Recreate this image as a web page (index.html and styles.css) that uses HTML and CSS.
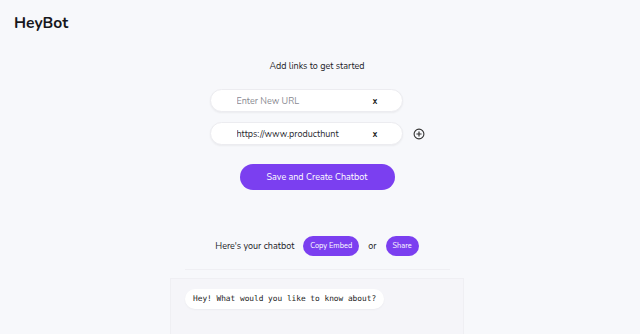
FILE: index.html
```html
<!DOCTYPE html>
<html>
<head>
<meta charset="utf-8">
<link rel="stylesheet" href="styles.css">
</head>
<body>
<header class="topbar"><h1 class="logo">HeyBot</h1></header>
<main class="main">
  <p class="intro">Add links to get started</p>
  <div class="links">
    <div class="link-row">
      <div class="url-field"><span class="url-text placeholder">Enter New URL</span><span class="clear">x</span></div>
      <span class="add-slot"></span>
    </div>
    <div class="link-row">
      <div class="url-field"><span class="url-text">https://www.producthunt</span><span class="clear">x</span></div>
      <span class="add-slot">
        <svg class="add-icon" viewBox="0 0 12 12" width="12" height="12"><circle cx="6" cy="6" r="4.9" fill="none" stroke="#333" stroke-width="1.1"/><path d="M6 3.4v5.2M3.4 6h5.2" stroke="#333" stroke-width="1.2"/></svg>
      </span>
    </div>
  </div>
  <button class="primary">Save and Create Chatbot</button>
  <div class="share-row">
    <span class="share-label">Here's your chatbot</span>
    <button class="small-btn">Copy Embed</button>
    <span class="or">or</span>
    <button class="small-btn">Share</button>
  </div>
  <div class="divider"></div>
  <section class="chat-card">
    <div class="bubble">Hey! What would you like to know about?</div>
  </section>
</main>
</body>
</html>
```
FILE: styles.css
```css
html, body { margin: 0; padding: 0; }
body {
  background: #f7f8fb;
  font-family: "Nunito", Lato, "Noto Sans", sans-serif;
  color: #1f1f24;
  width: 640px;
  height: 334px;
  overflow: hidden;
}
.topbar { padding: 14px 14px 0; height: 30px; box-sizing: border-box; }
.logo { margin: 0; font-size: 15.6px; font-weight: 700; color: #17171c; line-height: 18px; }
.main { width: 634px; display: flex; flex-direction: column; align-items: center; }
.intro { margin: 30px 0 0; font-size: 9px; line-height: 12px; color: #1a1a1f; }
.links { display: flex; flex-direction: column; gap: 10px; margin-top: 17px; }
.link-row { display: flex; align-items: center; gap: 10px; }
.url-field {
  width: 193px; height: 23px;
  background: #fff;
  border: 1px solid #ececf0;
  border-radius: 12px;
  display: flex; align-items: center;
  padding-left: 26px;
  box-sizing: border-box;
  box-shadow: 0 1px 2px rgba(0,0,0,0.05);
}
.url-text { width: 136px; font-size: 9px; color: #2a2a30; white-space: nowrap; overflow: hidden; }
.placeholder { color: #8a8a92; }
.clear { font-size: 9px; font-weight: 700; color: #222; }
.add-slot { width: 12px; height: 12px; display: flex; }
.primary {
  margin-top: 19px;
  width: 155px; height: 26px;
  border: none; border-radius: 13px;
  background: #7b3ff0;
  color: #fff;
  font-family: inherit; font-size: 9px;
  padding: 0;
}
.share-row { display: flex; align-items: center; margin-top: 46px; }
.share-label { font-size: 9px; color: #1a1a1f; margin-right: 9px; }
.small-btn {
  height: 20px; border: none; border-radius: 10px;
  background: #7b3ff0; color: #fff;
  font-family: inherit; font-size: 7.4px;
  padding: 0 7px;
}
.or { font-size: 9px; color: #222; margin: 0 9px; }
.divider { margin-top: 13px; width: 265px; height: 1px; background: #efeff3; }
.chat-card {
  margin-top: 8px;
  width: 294px; height: 56px;
  background: #f5f5f9;
  border-top: 1px solid #efeff3;
  border-left: 1px solid #efeff3;
  border-right: 1px solid #efeff3;
  box-sizing: border-box;
  padding: 6px 14px;
}
.bubble {
  display: inline-block;
  background: #fff;
  border-radius: 10px;
  padding: 4px 8px;
  font-family: "DejaVu Sans Mono", "Liberation Mono", monospace;
  font-size: 7.8px; line-height: 12px;
  color: #222;
  box-shadow: 0 1px 2px rgba(0,0,0,0.04);
}
```
